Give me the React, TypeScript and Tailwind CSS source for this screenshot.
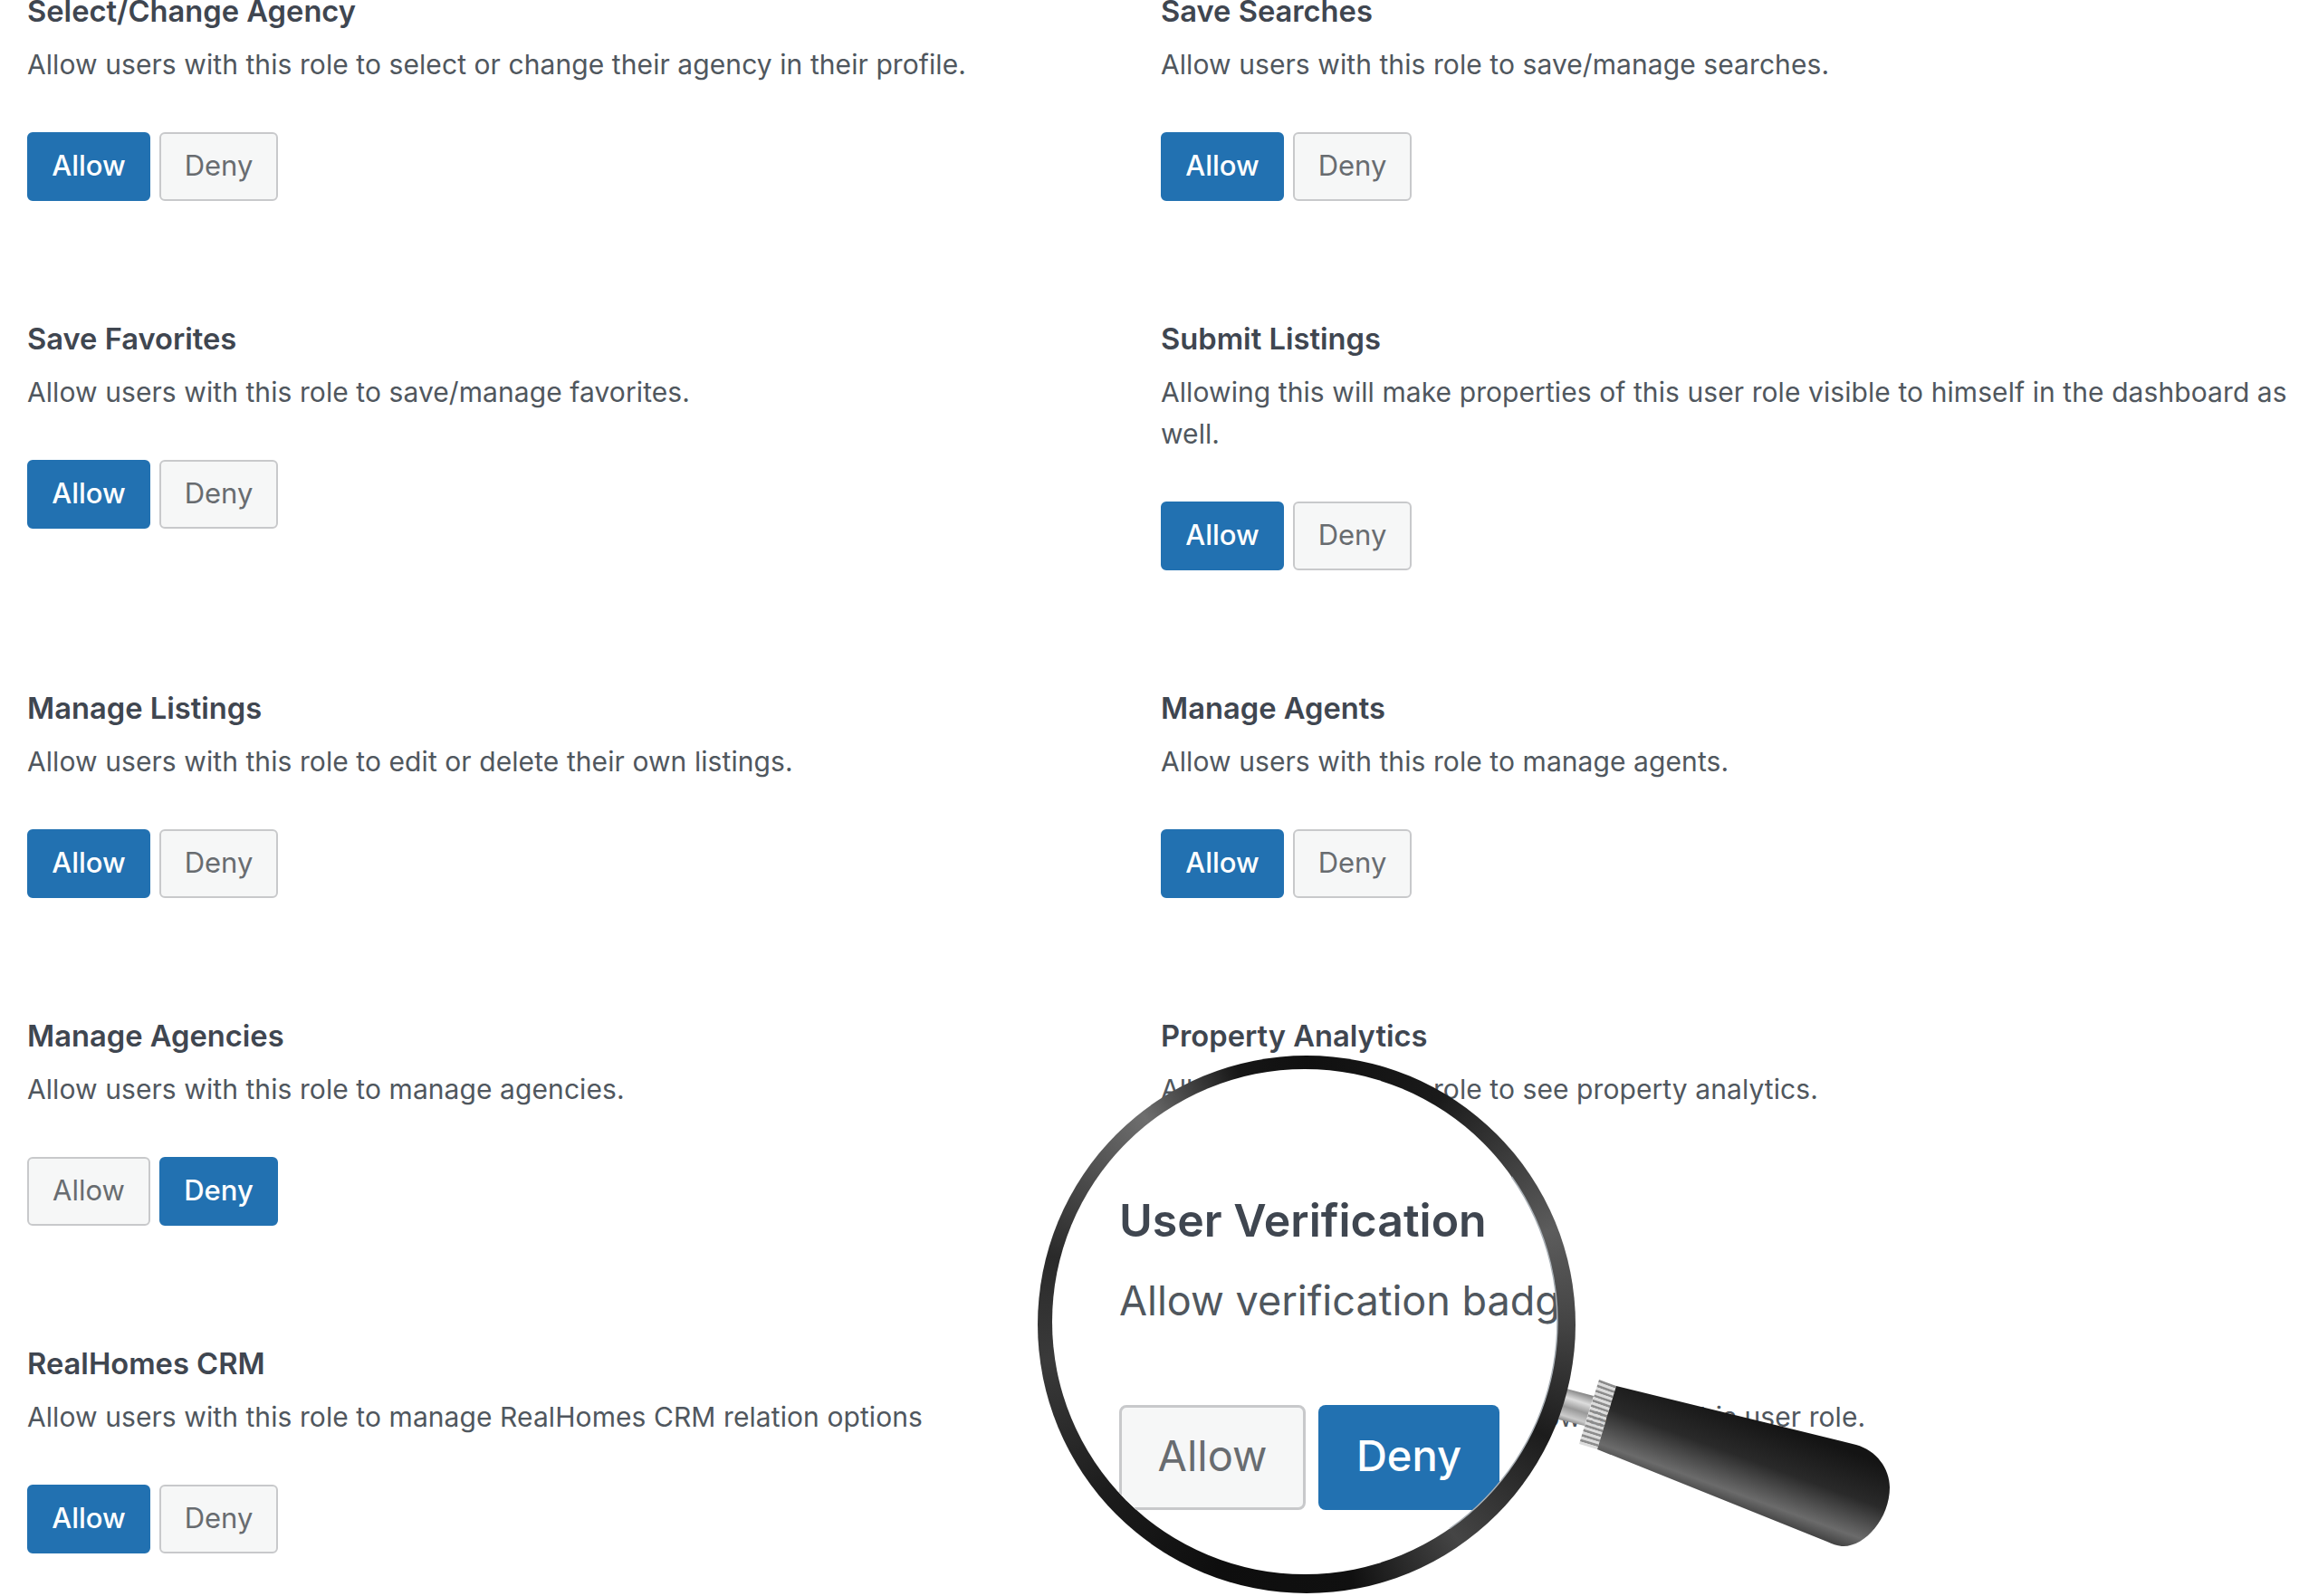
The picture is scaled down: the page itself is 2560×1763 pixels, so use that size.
import React from "react";

type Role = {
  title: string;
  desc: string;
  value: "allow" | "deny";
};

const rows: Role[][] = [
  [
    { title: "Select/Change Agency", desc: "Allow users with this role to select or change their agency in their profile.", value: "allow" },
    { title: "Save Searches", desc: "Allow users with this role to save/manage searches.", value: "allow" },
  ],
  [
    { title: "Save Favorites", desc: "Allow users with this role to save/manage favorites.", value: "allow" },
    { title: "Submit Listings", desc: "Allowing this will make properties of this user role visible to himself in the dashboard as well.", value: "allow" },
  ],
  [
    { title: "Manage Listings", desc: "Allow users with this role to edit or delete their own listings.", value: "allow" },
    { title: "Manage Agents", desc: "Allow users with this role to manage agents.", value: "allow" },
  ],
  [
    { title: "Manage Agencies", desc: "Allow users with this role to manage agencies.", value: "deny" },
    { title: "Property Analytics", desc: "Allow users with this role to see property analytics.", value: "allow" },
  ],
  [
    { title: "RealHomes CRM", desc: "Allow users with this role to manage RealHomes CRM relation options", value: "allow" },
    { title: "User Verification", desc: "Allow verification badge to show against this user role.", value: "deny" },
  ],
];

const Toggle = ({ active, label, width }: { active: boolean; label: string; width: string }) => (
  <span
    className={`flex h-[76px] items-center justify-center rounded-[6px] border-2 pb-[2px] text-[31px] ${width} ${
      active ? "border-[#2271b1] bg-[#2271b1] font-medium text-white" : "border-[#c8c9cb] bg-[#f6f7f7] text-[#686c70]"
    }`}
  >
    {label}
  </span>
);

const RoleCell = ({ role }: { role: Role }) => (
  <div className="pb-[130px]">
    <h3 className="text-[32.7px] leading-[44px] font-semibold text-[#3f4650]">{role.title}</h3>
    <p className="mt-[14px] text-[30px] leading-[46px] tracking-[0.08px] text-[#50575e]">{role.desc}</p>
    <div className="mt-[52px] flex gap-[10px]">
      <Toggle active={role.value === "allow"} label="Allow" width="w-[136px]" />
      <Toggle active={role.value === "deny"} label="Deny" width="w-[131px]" />
    </div>
  </div>
);

// knurled collar between the rod and the handle
const collarStripes = Array.from({ length: 26 }, (_, i) => {
  const t = i / 26;
  const t2 = (i + 1) / 26;
  return {
    points: `${1766 - 22 * t},${1524 + 71 * t} ${1785 - 21 * t},${1531 + 70 * t} ${1785 - 21 * t2},${1531 + 70 * t2} ${1766 - 22 * t2},${1524 + 71 * t2}`,
    fill: i % 2 === 0 ? "#8c8c8c" : "#dcdcdc",
  };
});

const Handle = () => (
  <svg className="absolute top-[1500px] left-[1700px] h-[230px] w-[400px]" viewBox="1700 1500 400 230" fill="none">
    <defs>
      <linearGradient id="grip" gradientUnits="userSpaceOnUse" x1="1925" y1="1560" x2="1885" y2="1670">
        <stop offset="0" stopColor="#141414" />
        <stop offset="0.4" stopColor="#2a2a2a" />
        <stop offset="0.74" stopColor="#6b6b6b" />
        <stop offset="1" stopColor="#1e1e1e" />
      </linearGradient>
      <linearGradient id="rod" gradientUnits="userSpaceOnUse" x1="1745" y1="1536" x2="1733" y2="1574">
        <stop offset="0" stopColor="#777" />
        <stop offset="0.3" stopColor="#ddd" />
        <stop offset="0.55" stopColor="#999" />
        <stop offset="0.8" stopColor="#ccc" />
        <stop offset="1" stopColor="#666" />
      </linearGradient>
    </defs>
    <polygon points="1715,1530 1760,1542 1750,1575 1705,1564" fill="url(#rod)" />
    {collarStripes.map((s) => (
      <polygon key={s.points} points={s.points} fill={s.fill} />
    ))}
    <path
      d="M1785 1531 L2050 1596 C2072 1602 2087 1622 2087 1643 C2087 1677 2060 1708 2036 1708 C2030 1708 2024 1706 2018 1703 L1764 1601 Z"
      fill="url(#grip)"
    />
  </svg>
);

const Lens = () => (
  <div className="absolute top-[1166px] left-[1146px] h-[594px] w-[594px] rounded-full bg-[conic-gradient(#101010_0deg,#1a1a1a_30deg,#5c5c5c_69deg,#444444_90deg,#1c1c1c_115deg,#454545_145deg,#101010_170deg,#0e0e0e_200deg,#1c1c1c_230deg,#3a3a3a_262deg,#2a2a2a_285deg,#6e6e6e_322deg,#161616_345deg,#101010_360deg)]">
    <div className="mt-[15px] ml-[16px] h-[558px] w-[558px] overflow-hidden rounded-full bg-white">
      <div className="pt-[140px] pl-[74px]">
        <h3 className="text-[50px] leading-[54px] font-semibold whitespace-nowrap text-[#3f4650]">User Verification</h3>
        <p className="mt-[35px] text-[45px] leading-[54px] whitespace-nowrap text-[#50575e]">
          Allow verification badge to show
        </p>
        <div className="mt-[88px] flex gap-[14px]">
          <span className="flex h-[116px] w-[206px] items-center justify-center rounded-[8px] border-[3px] border-[#c8c9cb] bg-[#f6f7f7] pb-[4px] text-[47px] text-[#686c70]">
            Allow
          </span>
          <span className="flex h-[116px] w-[200px] items-center justify-center rounded-[8px] bg-[#2271b1] pb-[4px] text-[47px] font-medium text-white">
            Deny
          </span>
        </div>
      </div>
    </div>
    {/* light inner edge of the glass on the handle side */}
    <svg className="absolute top-0 left-0 h-[594px] w-[594px]" viewBox="0 0 594 594" fill="none">
      <path d="M523.5 134 A279 279 0 0 1 455 522.5" stroke="#a9b0b6" strokeWidth="1.5" />
    </svg>
  </div>
);

export default function App() {
  return (
    <div className="relative h-[1763px] overflow-hidden bg-white font-[Inter,sans-serif]">
      <div className="-mt-[10px] flex flex-col pr-[12px] pl-[30px]">
        {rows.map((row) => (
          <div key={row[0].title} className="grid grid-cols-[1222px_1fr] gap-[30px]">
            <RoleCell role={row[0]} />
            <RoleCell role={row[1]} />
          </div>
        ))}
      </div>
      <Handle />
      <Lens />
    </div>
  );
}
